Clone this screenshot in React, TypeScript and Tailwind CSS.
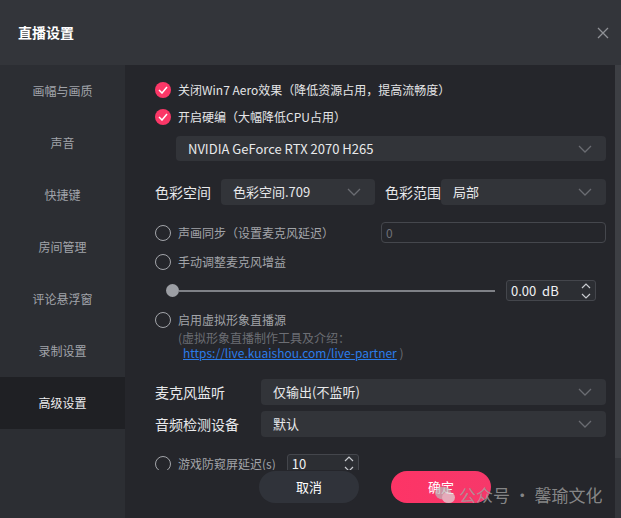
import React from 'react'

const font = { fontFamily: '"Noto Sans CJK SC", "Noto Sans", sans-serif' }

const sideItems = ['画幅与画质', '声音', '快捷键', '房间管理', '评论悬浮窗', '录制设置', '高级设置']

const Chevron = () => (
    <svg width="14" height="8" viewBox="0 0 14 8" className="shrink-0">
        <polyline points="1,1 7,7 13,1" fill="none" stroke="#6a6c72" strokeWidth="1.3" />
    </svg>
)

const Spin = () => (
    <svg width="12" height="20" viewBox="0 0 12 20" className="shrink-0">
        <polyline points="2,7 6,3 10,7" fill="none" stroke="#c9cbd0" strokeWidth="1.2" />
        <polyline points="2,13 6,17 10,13" fill="none" stroke="#c9cbd0" strokeWidth="1.2" />
    </svg>
)

const Check = ({ label }: { label: string }) => (
    <div className="flex items-center gap-[7px] h-[16px]">
        <div className="w-[16px] h-[16px] rounded-full bg-[#fb3767] flex items-center justify-center">
            <svg width="10" height="8" viewBox="0 0 10 8">
                <polyline points="1,4 4,7 9,1" fill="none" stroke="#fff" strokeWidth="1.5" />
            </svg>
        </div>
        <span className="text-[12px] text-[#e4e5e7]">{label}</span>
    </div>
)

const Radio = ({ label }: { label: string }) => (
    <div className="flex items-center gap-[7px] h-[16px]">
        <div className="w-[16px] h-[16px] rounded-full border-[1.5px] border-[#a3a5aa]" />
        <span className="text-[12px] text-[#a2a4a9]">{label}</span>
    </div>
)

const Select = ({ value, className }: { value: string; className: string }) => (
    <div
        className={
            'flex items-center justify-between rounded-[4px] bg-[#323439] pl-[12px] pr-[14px] text-[13px] text-[#e8e9eb] ' +
            className
        }
    >
        <span>{value}</span>
        <Chevron />
    </div>
)

export default function App() {
    return (
        <div style={font} className="w-[621px] h-[518px] bg-[#33353a] flex flex-col overflow-hidden relative">
            <div className="h-[65px] shrink-0 flex items-center justify-between pl-[18px] pr-[12px]">
                <span className="text-[14px] font-bold text-white">直播设置</span>
                <svg width="12" height="12" viewBox="0 0 12 12">
                    <path d="M1 1L11 11M11 1L1 11" stroke="#8f9196" strokeWidth="1.3" />
                </svg>
            </div>
            <div className="flex flex-1 min-h-0">
                <div className="w-[125px] shrink-0 bg-[#2c2e33] flex flex-col">
                    {sideItems.map(item => (
                        <div
                            key={item}
                            className={
                                'h-[52px] flex items-center justify-center text-[12px] ' +
                                (item === '高级设置' ? 'bg-[#1f2024] text-[#ececee]' : 'text-[#a1a4aa]')
                            }
                        >
                            {item}
                        </div>
                    ))}
                </div>
                <div className="flex-1 bg-[#25262b] flex flex-col min-w-0">
                    <div className="h-[405px] shrink-0 overflow-hidden pl-[30px] pr-[9px] pt-[17px]">
                        <Check label="关闭Win7 Aero效果（降低资源占用，提高流畅度）" />
                        <div className="mt-[11px]">
                            <Check label="开启硬编（大幅降低CPU占用）" />
                        </div>
                        <Select value="NVIDIA GeForce RTX 2070 H265" className="ml-[21px] mt-[11px] h-[25px]" />
                        <div className="flex items-center mt-[18px] h-[26px]">
                            <span className="w-[66px] text-[14px] text-[#e8e9eb]">色彩空间</span>
                            <Select value="色彩空间.709" className="w-[154px] h-[26px]" />
                            <span className="w-[66px] pl-[10px] text-[14px] text-[#e8e9eb]">色彩范围</span>
                            <Select value="局部" className="flex-1 h-[26px]" />
                        </div>
                        <div className="flex items-center justify-between mt-[17px] h-[21px]">
                            <Radio label="声画同步（设置麦克风延迟）" />
                            <div className="w-[225px] h-[21px] rounded-[4px] border border-[#45474d] px-[4px] text-[12px] text-[#6f7177] flex items-center">
                                0
                            </div>
                        </div>
                        <div className="mt-[11px]">
                            <Radio label="手动调整麦克风增益" />
                        </div>
                        <div className="flex items-center mt-[10px] h-[21px] pl-[11px] pr-[10px]">
                            <div className="w-[13px] h-[13px] rounded-full bg-[#9c9ea4] shrink-0" />
                            <div className="flex-1 h-[2px] bg-[#7f8187]" />
                            <div className="ml-[11px] w-[90px] h-[21px] rounded-[3px] border border-[#44464c] bg-[#2c2e33] flex items-center justify-between pl-[4px] pr-[3px] text-[13px] text-[#f0f1f3]">
                                <span>0.00&nbsp; dB</span>
                                <Spin />
                            </div>
                        </div>
                        <div className="mt-[11px]">
                            <Radio label="启用虚拟形象直播源" />
                        </div>
                        <div className="pl-[23px] mt-[2px] text-[12px] leading-[15px] text-[#6c6e74]">
                            <div>(虚拟形象直播制作工具及介绍：</div>
                            <div className="pl-[5px]">
                                <span className="text-[#2b7ce9] underline">https://live.kuaishou.com/live-partner</span> )
                            </div>
                        </div>
                        <div className="flex items-center mt-[19px] h-[26px]">
                            <span className="w-[106px] text-[14px] text-[#e8e9eb]">麦克风监听</span>
                            <Select value="仅输出(不监听)" className="flex-1 h-[26px]" />
                        </div>
                        <div className="flex items-center mt-[6px] h-[26px]">
                            <span className="w-[106px] text-[14px] text-[#e8e9eb]">音频检测设备</span>
                            <Select value="默认" className="flex-1 h-[26px]" />
                        </div>
                        <div className="flex items-center mt-[17px] h-[20px]">
                            <Radio label="游戏防窥屏延迟(s)" />
                            <div className="ml-[11px] w-[72px] h-[20px] rounded-[3px] border border-[#44464c] bg-[#2c2e33] flex items-center justify-between pl-[4px] pr-[3px] text-[13px] text-[#f0f1f3]">
                                <span>10</span>
                                <Spin />
                            </div>
                        </div>
                    </div>
                    <div className="flex justify-center gap-[32px] pt-[1px] pl-[10px]">
                        <div className="w-[100px] h-[32px] rounded-full bg-[#30333a] text-white text-[13px] flex items-center justify-center">
                            取消
                        </div>
                        <div className="w-[100px] h-[32px] rounded-full bg-gradient-to-r from-[#fd3466] to-[#f6386a] text-white text-[13px] flex items-center justify-center">
                            确定
                        </div>
                    </div>
                </div>
                <div className="w-[6px] shrink-0 bg-[#33353a] flex flex-col">
                    <div className="h-[393px] bg-[#3d3f44]" />
                </div>
            </div>
            <div className="absolute left-[434px] top-[482px] flex items-center gap-[3px] text-[17px] text-[#a0a0a0]/80">
                <svg width="22" height="20" viewBox="0 0 22 20" className="opacity-70">
                    <ellipse cx="9" cy="8" rx="8" ry="6.5" fill="#bbb" />
                    <ellipse cx="14.5" cy="12.5" rx="6.5" ry="5.5" fill="#ddd" />
                </svg>
                <span>公众号 · 馨瑜文化</span>
            </div>
        </div>
    )
}
